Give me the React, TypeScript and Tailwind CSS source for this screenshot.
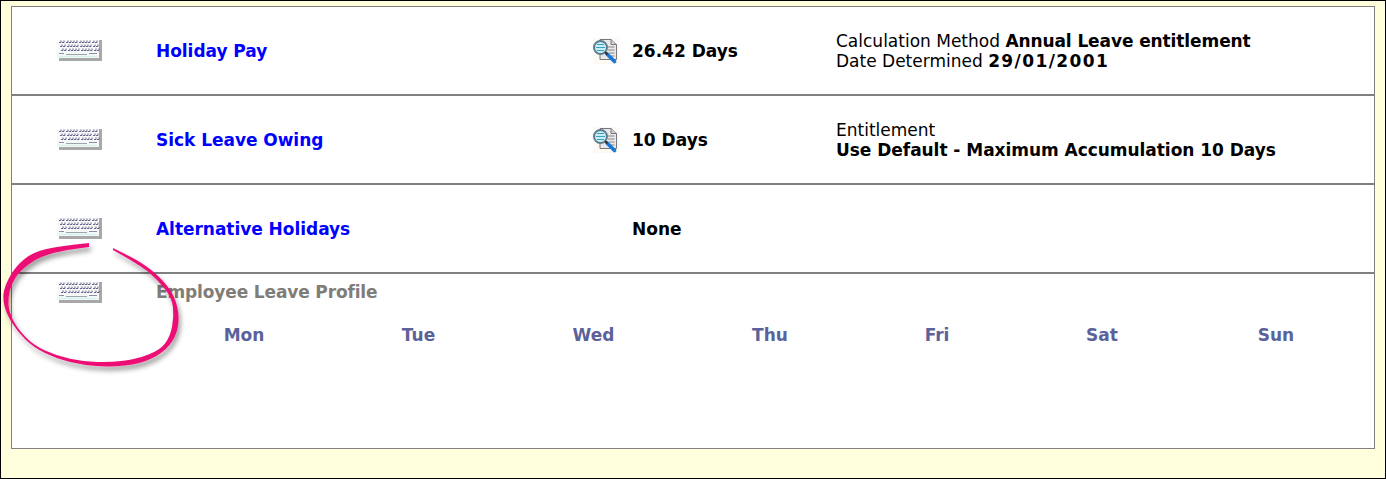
import React from "react";

function Keyboard() {
  const keys: React.ReactNode[] = [];
  for (let r = 0; r < 3; r++) {
    for (let c = 0; c < 12; c++) {
      const x = Math.round(2 + r + c * 3.25);
      keys.push(<path key={`${r}-${c}`} d={`M${x} ${3.5 + r * 4}h2v-2`} stroke="#66658e" strokeWidth="1" fill="none" />);
    }
  }
  return (
    <svg width="45" height="22" viewBox="0 0 45 22" className="block">
      <rect x="2" y="1" width="43" height="21" fill="#a8a8a8" />
      <rect x="0" y="0" width="42" height="19" fill="#f7f8f8" />
      <rect x="0" y="16" width="42" height="3" fill="#eef7f5" />
      <rect x="0" y="0" width="42" height="1" fill="#ffffff" />
      {keys}
      <path d="M2 14.5h5M32 14.5h8" stroke="#8a90a0" strokeWidth="1" />
      <path d="M9 15.5h21" stroke="#98a6ae" strokeWidth="1" />
      <path d="M2 17.5h38" stroke="#d8f2ec" strokeWidth="1" />
    </svg>
  );
}

function DocSearch() {
  return (
    <svg width="26" height="26" viewBox="0 0 26 26" className="block">
      <rect x="0" y="0" width="26" height="26" fill="#fff9f4" />
      <path d="M7 1.5h11l5.5 5v15H7z" fill="#ebe9e6" stroke="#77777f" strokeWidth="1" />
      <path d="M18 1.5v5h5.5" fill="#cfcfd4" stroke="#77777f" strokeWidth="1" />
      <path d="M15 9h6.5M15 12h6.5M16 15h5.5M18 18h3.5" stroke="#84848c" strokeWidth="1" />
      <circle cx="7.5" cy="9.5" r="6.5" fill="#c8edf2" stroke="#5b7c92" strokeWidth="2" />
      <path d="M4 6.5h7M3 9.5h9M4 12.5h7" stroke="#3da1c4" strokeWidth="1.2" />
      <path d="M14 16l7.5 7.5" stroke="#1778d8" strokeWidth="3.6" strokeLinecap="round" />
      <path d="M12 14l2.5 2.5" stroke="#333" strokeWidth="2" />
    </svg>
  );
}

function Row({ title, icon, value, children }: { title: string; icon?: boolean; value: string; children?: React.ReactNode }) {
  return (
    <div className="h-[89px] border-b-2 border-[#808080] grid grid-cols-[144px_436px_40px_204px_1fr] items-center">
      <div className="pl-[45px] pb-[1px]"><Keyboard /></div>
      <a className="font-bold tracking-[-0.04px] text-[#0000ff]">{title}</a>
      <div className="pl-[1px]">{icon && <DocSearch />}</div>
      <div className="font-bold text-black">{value}</div>
      <div className="text-black leading-[20px]">{children}</div>
    </div>
  );
}

const outer: [number, number][] = [
  [89, 243], [60, 246], [33, 252], [16, 266], [6, 283], [2.5, 297], [6, 313], [17, 331], [33, 347], [57, 359],
  [83, 365], [110, 367], [140, 364], [163, 353], [176, 337], [179.5, 317], [175, 297], [163, 280], [143, 263], [113, 248],
];
const inner: [number, number][] = [
  [113, 250], [140, 265], [158, 280], [172, 298], [174, 317], [170, 337], [160, 350], [137, 359], [110, 362.5], [83, 361.5],
  [57, 356], [33, 345], [17, 328], [9, 312], [8, 297], [12, 283], [20, 271], [37, 258], [60, 251], [89, 247],
];

function smooth(pts: [number, number][]) {
  let d = `M${pts[0][0]} ${pts[0][1] - 230}`;
  for (let i = 1; i < pts.length - 1; i++) {
    const mx = (pts[i][0] + pts[i + 1][0]) / 2;
    const my = (pts[i][1] + pts[i + 1][1]) / 2 - 230;
    d += ` Q${pts[i][0]} ${pts[i][1] - 230} ${mx} ${my}`;
  }
  const l = pts[pts.length - 1];
  return d + ` L${l[0]} ${l[1] - 230}`;
}

export default function App() {
  const days = ["Mon", "Tue", "Wed", "Thu", "Fri", "Sat", "Sun"];
  const ring = smooth(outer) + " L" + smooth(inner).slice(1) + " Z";
  return (
    <div className="relative w-[1386px] h-[479px] overflow-hidden border border-black bg-[#ffffdd] pt-[5px] pl-[10px] font-['DejaVu_Sans',sans-serif] text-[17px] leading-[24px]">
      <div className="w-[1364px] h-[443px] border border-[#808080] bg-white">
        <Row title="Holiday Pay" icon value="26.42 Days">
          <div>Calculation Method <b className="tracking-[-0.1px]">Annual Leave entitlement</b></div>
          <div>Date Determined <b className="tracking-[1.4px]">29/01/2001</b></div>
        </Row>
        <Row title="Sick Leave Owing" icon value="10 Days">
          <div>Entitlement</div>
          <div><b className="tracking-[-0.04px]">Use Default - Maximum Accumulation 10 Days</b></div>
        </Row>
        <Row title="Alternative Holidays" value="None" />
        <div className="grid grid-cols-[144px_1fr] pt-[6px] items-start">
          <div className="pl-[45px] mt-[1px]"><Keyboard /></div>
          <div className="font-bold tracking-[-0.14px] text-[#807d78]">Employee Leave Profile</div>
        </div>
        <div className="grid grid-cols-[176px_173px_177px_176px_158px_172px_176px] ml-[144px] mt-[19px] font-bold text-[#5b6299] text-center">
          {days.map((d) => <div key={d}>{d}</div>)}
        </div>
      </div>
      <svg width="190" height="150" viewBox="0 0 190 150" className="absolute left-[-1px] top-[229px] pointer-events-none">
        <defs>
          <filter id="s" x="-20%" y="-20%" width="140%" height="140%">
            <feDropShadow dx="2" dy="4" stdDeviation="2.5" floodColor="#000" floodOpacity="0.4" />
          </filter>
        </defs>
        <path filter="url(#s)" fill="#ec0f75" d={ring} />
      </svg>
    </div>
  );
}
